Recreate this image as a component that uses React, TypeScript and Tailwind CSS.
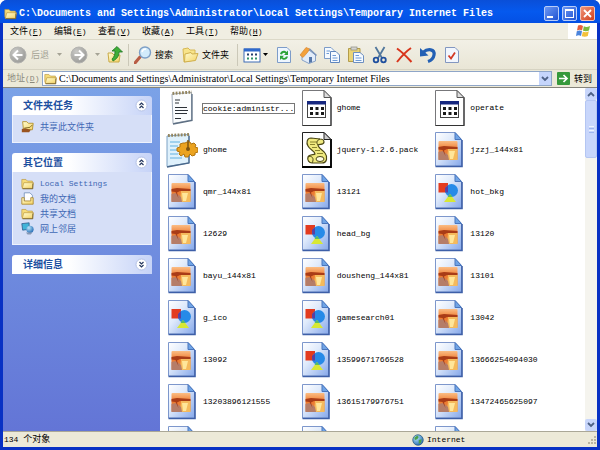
import React, { useState } from 'react';

type FileKind = 'text' | 'config' | 'inf' | 'script' | 'photo' | 'shapes';

interface FileItem {
  id: number;
  name: string;
  kind: FileKind;
}

interface PanelProps {
  title: string;
  open?: boolean;
  children?: React.ReactNode;
}

const PATH = 'C:\\Documents and Settings\\Administrator\\Local Settings\\Temporary Internet Files';

const MENUS = [
  { label: '文件', accel: 'F' },
  { label: '编辑', accel: 'E' },
  { label: '查看', accel: 'V' },
  { label: '收藏', accel: 'A' },
  { label: '工具', accel: 'T' },
  { label: '帮助', accel: 'H' },
];

const FILES: FileItem[] = [
  { id: 1, name: 'cookie:administr...', kind: 'text' },
  { id: 2, name: 'ghome', kind: 'config' },
  { id: 3, name: 'operate', kind: 'config' },
  { id: 4, name: 'ghome', kind: 'inf' },
  { id: 5, name: 'jquery-1.2.6.pack', kind: 'script' },
  { id: 6, name: 'jzzj_144x81', kind: 'photo' },
  { id: 7, name: 'qmr_144x81', kind: 'photo' },
  { id: 8, name: '13121', kind: 'photo' },
  { id: 9, name: 'hot_bkg', kind: 'shapes' },
  { id: 10, name: '12629', kind: 'photo' },
  { id: 11, name: 'head_bg', kind: 'shapes' },
  { id: 12, name: '13120', kind: 'photo' },
  { id: 13, name: 'bayu_144x81', kind: 'photo' },
  { id: 14, name: 'dousheng_144x81', kind: 'photo' },
  { id: 15, name: '13101', kind: 'photo' },
  { id: 16, name: 'g_ico', kind: 'shapes' },
  { id: 17, name: 'gamesearch01', kind: 'shapes' },
  { id: 18, name: '13042', kind: 'photo' },
  { id: 19, name: '13092', kind: 'photo' },
  { id: 20, name: '13599671766528', kind: 'shapes' },
  { id: 21, name: '13666254094030', kind: 'photo' },
  { id: 22, name: '13203896121555', kind: 'photo' },
  { id: 23, name: '13615179976751', kind: 'photo' },
  { id: 24, name: '13472465625097', kind: 'photo' },
  { id: 25, name: '', kind: 'photo' },
  { id: 26, name: '', kind: 'photo' },
  { id: 27, name: '', kind: 'photo' },
];

// Gradients shared by all icons
const IconDefs = () => (
  <svg width="0" height="0" className="absolute" aria-hidden="true">
    <defs>
      <linearGradient id="page" x1="0" y1="0" x2="1" y2="1">
        <stop offset="0" stopColor="#ffffff" />
        <stop offset="0.4" stopColor="#dfeafb" />
        <stop offset="1" stopColor="#86a8ea" />
      </linearGradient>
      <linearGradient id="sunset" x1="0" y1="0" x2="0" y2="1">
        <stop offset="0" stopColor="#fbbd84" />
        <stop offset="0.45" stopColor="#ee7a30" />
        <stop offset="1" stopColor="#dd8a44" />
      </linearGradient>
      <linearGradient id="folder" x1="0" y1="0" x2="1" y2="1">
        <stop offset="0" stopColor="#fffdd2" />
        <stop offset="1" stopColor="#f4d264" />
      </linearGradient>
      <radialGradient id="disc" cx="0.35" cy="0.3" r="0.8">
        <stop offset="0" stopColor="#c9c9c6" />
        <stop offset="1" stopColor="#979794" />
      </radialGradient>
      <radialGradient id="globe" cx="0.35" cy="0.3" r="0.8">
        <stop offset="0" stopColor="#b8e6fa" />
        <stop offset="1" stopColor="#1a63b0" />
      </radialGradient>
    </defs>
  </svg>
);

const BluePage = () => (
  <>
    <path d="M2.500 .500H22L28.500 7.500V34H2.500Z" fill="url(#page)" stroke="#7d97cc" />
    <path d="M29 8V34.500H2.500" fill="none" stroke="#3d5fa8" strokeWidth="1.600" />
    <path d="M22 .500V7.500H28.500Z" fill="#6fa4e6" stroke="#4a76bd" />
  </>
);

const FileIcon = ({ kind }: { kind: FileKind }) => {
  return (
    <svg viewBox="0 0 32 36" className="h-9 w-8 shrink-0" aria-hidden="true">
      {kind === 'text' && (
        <>
          <path d="M6 4L25.500 2.500V30L7 33.500Z" fill="#fafcfd" stroke="#8a98a8" strokeWidth="0.800" />
          <path d="M26 4V30.500L7 34" fill="none" stroke="#5c6e82" strokeWidth="1.300" />
          <path d="M6.500 3.500L26 2" stroke="#93855e" strokeWidth="3" strokeDasharray="1.800 1.400" />
          <path d="M9 10H14M9 13H13M9 17.500H21M9 20.500H22M9 23.500H21M9 28.500H15" stroke="#2c3238" strokeWidth="1.200" />
        </>
      )}

      {kind === 'config' && (
        <>
          <path d="M2.500 .500H24L31 7.500V35.500H2.500Z" fill="#fff" stroke="#77777a" />
          <path d="M31 7.500V35.500H2.500" fill="none" stroke="#333" strokeWidth="1.200" />
          <path d="M24 .500V7.500H31Z" fill="#ddd" stroke="#555" />
          <rect x="7.500" y="11.500" width="18" height="16" fill="#fff" stroke="#444" />
          <rect x="7" y="11" width="19" height="3.500" fill="#16277f" />
          <path d="M10 18.500H24M10 23.500H24" stroke="#1a1a1a" strokeWidth="3" strokeDasharray="3 2.500" />
        </>
      )}

      {kind === 'inf' && (
        <>
          <path d="M1 4L23 2.500V31L1 34.500Z" fill="#dff1fc" stroke="#7da2c4" />
          <path d="M23 4V31L1 35" fill="none" stroke="#49678a" strokeWidth="1.300" />
          <path d="M2 3.500L23 2.500" stroke="#93855e" strokeWidth="3" strokeDasharray="1.800 1.400" />
          <path d="M4 10H14M4 14H12M4 18H11M4 22H12M4 26H16" stroke="#63b1e2" strokeWidth="1.200" />
          <path
            d="M19 11L21 10H24L25 12L28 11L30 13L29 15L32 16V20L29 21L29 23L26 24L24 22L22 25H19L18 22L15 24L13 22L14 20L11 19V16L14 15L14 12L17 11Z"
            fill="#eba320"
            stroke="#b2750f"
          />
          <path d="M22 8V18" stroke="#7c5410" strokeWidth="1.500" />
          <circle cx="22" cy="17" r="2" fill="#7c5410" />
        </>
      )}

      {kind === 'script' && (
        <>
          <path d="M2.500 .500H24L31 7.500V35H2.500Z" fill="#fff" stroke="#222" />
          <path d="M31 7V35H2" fill="none" stroke="#000" strokeWidth="1.800" />
          <path d="M24 .500V7.500H31Z" fill="#ccc" stroke="#222" />
          <path
            d="M11 6C7 6 6 11 8 14C10 18 15 19 15 22C14 23 9 22 8 25C7 28 9 31 12 31H22C27 31 28 25 25 21C23 18 18 16 18 13C20 12 24 13 24 10C24 8 22 7 20 7Z"
            fill="#f0ea80"
            stroke="#4b4715"
            strokeWidth="1.200"
          />
          <path d="M10 10H17M10 12.500H15M12 15.500H17M15 18.500H20M17 21.500H23" stroke="#8a842f" />
          <path d="M8 25C11 23 15 26 12 31M18 13C16 11 17 8 20 7" fill="none" stroke="#4b4715" />
          <ellipse cx="20" cy="27" rx="4" ry="2.500" fill="#fffce0" stroke="#4b4715" />
        </>
      )}

      {kind === 'photo' && (
        <>
          <BluePage />
          <rect x="5.500" y="9" width="19" height="19" rx="1" fill="url(#sunset)" />
          <path d="M15 17H24.500V28H14Z" fill="#f5ba5c" />
          <path d="M16 19H22L20 27H17Z" fill="#ffe69a" />
          <path d="M5.500 20L10 19L15 23L16 28H5.500Z" fill="#b57d68" />
          <path d="M5.500 15L11 14L24.500 15V17L14 17L11 18.500L12.500 24L9.500 18L5.500 17.500Z" fill="#a93c17" />
        </>
      )}

      {kind === 'shapes' && (
        <>
          <BluePage />
          <rect x="5.500" y="9" width="9.500" height="9.500" fill="#e33b1f" />
          <circle cx="18.500" cy="16.500" r="6.500" fill="#268ae8" />
          <path d="M12 14L15 11.500V18.500H12.300Z" fill="#5a3ea0" />
          <path d="M17 20L23 28H11Z" fill="#d8e834" />
          <path d="M17 20L19.500 23H14.500Z" fill="#58bd63" />
        </>
      )}
    </svg>
  );
};

const FolderIcon = () => (
  <svg viewBox="0 0 16 16" className="size-[13px] shrink-0" aria-hidden="true">
    <path d="M1 3H6L8 5H14V14H2L1 12Z" fill="#f6dc7a" stroke="#b9953c" strokeWidth="0.800" />
    <path d="M3.500 7H15.500L14 14H1.500Z" fill="url(#folder)" stroke="#b9953c" strokeWidth="0.800" />
    <path d="M2 14.500H14.500V8" fill="none" stroke="#6e5c2c" />
  </svg>
);

const DocumentsIcon = () => (
  <svg viewBox="0 0 16 16" className="size-[13px] shrink-0" aria-hidden="true">
    <path d="M4 1H11L14 4V12H4Z" fill="#fff" stroke="#6f8db8" />
    <path d="M1 7H4V11H12V7H15V15H1Z" fill="url(#folder)" stroke="#a88328" />
  </svg>
);

const ShareIcon = () => (
  <svg viewBox="0 0 16 16" className="size-[13px] shrink-0" aria-hidden="true">
    <path d="M2 2H7L9 4H15L14 12H3Z" fill="url(#folder)" stroke="#b08a1e" />
    <path d="M1 11L5 10L12 12L10 15H1Z" fill="#9a5420" />
    <path d="M4 10L11 9L14 6" fill="none" stroke="#6e5a17" />
  </svg>
);

const NetworkIcon = () => (
  <svg viewBox="0 0 16 16" className="size-[13px] shrink-0" aria-hidden="true">
    <path d="M1 2L10 1V9L2 10Z" fill="#3fb4d8" stroke="#2d5f8f" />
    <circle cx="11" cy="9" r="4.500" fill="url(#globe)" />
    <path d="M6 13H14L12 15.500H8Z" fill="#8899b5" />
  </svg>
);

const GlobeIcon = () => (
  <svg viewBox="0 0 16 16" className="h-3 w-3 shrink-0" aria-hidden="true">
    <circle cx="8" cy="8" r="7" fill="url(#globe)" stroke="#2a5b7e" />
    <path d="M3 5L7 2L9 4L7 7L4 8ZM9 8L13 7L12 12L9 13Z" fill="#4aa14b" />
  </svg>
);

const NavDisc = ({ forward = false }: { forward?: boolean }) => (
  <svg viewBox="0 0 18 18" className="size-[18px]" aria-hidden="true">
    <circle cx="9" cy="9" r="8" fill="url(#disc)" stroke="#b3b3af" />
    {forward ? (
      <path d="M4.500 9H13M9 4.500L13.500 9L9 13.500" fill="none" stroke="#fff" strokeWidth="2" />
    ) : (
      <path d="M13.500 9H5M9 4.500L4.500 9L9 13.500" fill="none" stroke="#fff" strokeWidth="2" />
    )}
  </svg>
);

const Caret = ({ className }: { className: string }) => (
  <svg viewBox="0 0 5 3" className={className} aria-hidden="true">
    <path d="M0 0H5L2.500 3Z" fill="currentColor" />
  </svg>
);

const ToolButton = ({ label, children }: { label: string; children: React.ReactNode }) => (
  <button type="button" aria-label={label} className="w-6 flex justify-center">
    <svg viewBox="0 0 18 18" className="size-[18px]" aria-hidden="true">
      {children}
    </svg>
  </button>
);

const Panel: React.FC<PanelProps> = ({ title, open = true, children }) => {
  const [expanded, setExpanded] = useState(open);

  return (
    <section className="rounded-t-[3px] overflow-hidden">
      <button
        type="button"
        onClick={() => setExpanded(!expanded)}
        aria-expanded={expanded}
        className="flex h-[19px] w-full items-center justify-between bg-linear-to-r from-white from-40% to-[#c6d3f7] pl-[11px] pr-1 text-[10px] font-bold text-[#1c4f9f]"
      >
        {title}
        <svg viewBox="0 0 13 13" className="size-[13px]" aria-hidden="true">
          <circle cx="6.500" cy="6.500" r="5.500" fill="#fff" stroke="#b3c0e4" />
          <path
            d={expanded ? 'M4.500 6L6.500 4L8.500 6M4.500 9L6.500 7L8.500 9' : 'M4.500 4L6.500 6L8.500 4M4.500 7L6.500 9L8.500 7'}
            fill="none"
            stroke="#26385f"
            strokeWidth="1.200"
          />
        </svg>
      </button>
      {expanded && children && (
        <ul className="border border-t-0 border-[#eef2fd] bg-[#d6dff7] px-2 pt-1 pb-2">{children}</ul>
      )}
    </section>
  );
};

const PanelLink = ({ icon, children }: { icon: React.ReactNode; children: React.ReactNode }) => (
  <li>
    <a href="#" className="flex h-[15px] items-center gap-[6px] text-[#3f68b5]">
      {icon}
      {children}
    </a>
  </li>
);

const Separator = () => <div className="h-[22px] w-px bg-[#cbc8b8]" />;

export default function App() {
  const [address, setAddress] = useState(PATH);

  return (
    <div className="flex h-screen flex-col overflow-hidden rounded-t-[7px] bg-[#0831c4] font-['Liberation_Sans','Noto_Sans_CJK_SC',sans-serif] text-[9px] leading-3 text-black">
      <IconDefs />

      {/* Title bar */}
      <header className="flex h-[23px] shrink-0 items-center bg-linear-to-b from-[#0a4fd8] via-[#0559ee] to-[#0450e4] pl-1 pr-[5px] pt-1">
        <FolderIcon />
        <h1 className="ml-[2px] flex-1 truncate font-['Liberation_Mono',monospace] text-[10px] font-bold text-white">{PATH}</h1>
        <div className="flex gap-[3px]">
          <button type="button" aria-label="最小化" className="flex size-[15px] items-end rounded-[2px] border border-[#b9cdf8] bg-linear-to-br from-[#6d97f3] to-[#1f52d2] p-[2px]">
            <span className="h-[2px] w-[6px] bg-white" />
          </button>
          <button type="button" aria-label="最大化" className="flex size-[15px] items-center justify-center rounded-[2px] border border-[#b9cdf8] bg-linear-to-br from-[#6d97f3] to-[#1f52d2]">
            <span className="size-[9px] border border-t-2 border-white" />
          </button>
          <button type="button" aria-label="关闭" className="flex size-[15px] items-center justify-center rounded-[2px] border border-[#f2c4b8] bg-linear-to-br from-[#f09276] to-[#cf3d16]">
            <svg viewBox="0 0 9 9" className="size-[9px]" aria-hidden="true">
              <path d="M1 1L8 8M8 1L1 8" stroke="#fff" strokeWidth="1.800" />
            </svg>
          </button>
        </div>
      </header>

      <div className="mx-[3px] mb-[3px] flex min-h-0 flex-1 flex-col bg-[#ece9d8]">
        {/* Menu bar */}
        <nav className="flex h-[17px] shrink-0 items-stretch border-b border-[#dcd9c8] bg-[#f0eee2]">
          <div className="flex flex-1 items-center pl-[7px]">
            {MENUS.map((menu) => (
              <button key={menu.accel} type="button" className="w-11 text-left">
                {menu.label}
                <span className="font-['Liberation_Mono',monospace] text-[8px]">
                  (<u>{menu.accel}</u>)
                </span>
              </button>
            ))}
          </div>
          <div className="flex w-[29px] items-center justify-center bg-white">
            <svg viewBox="0 0 16 14" className="h-[14px] w-4" aria-hidden="true">
              <path d="M3 1.500C5 .500 6.500 1 8 2L7 6.500C5.500 5.500 4 5.500 2 6.500Z" fill="#e8603c" />
              <path d="M8.800 2.300C11 3.300 12.500 3 15 2L14 6.500C12 7.500 10 7.500 8 6.800Z" fill="#7cb93f" />
              <path d="M1.800 7.300C4 6.300 5.500 6.500 7 7.300L6 12C4.500 11 3 11 1 12Z" fill="#4b84dc" />
              <path d="M7.800 7.700C10 8.500 12 8.200 13.800 7.300L12.800 12C11 13 9 13 6.800 12.300Z" fill="#f4c13a" />
            </svg>
          </div>
        </nav>

        {/* Toolbar */}
        <div className="flex h-[30px] shrink-0 items-center border-b border-[#d6d3c2] bg-linear-to-b from-[#f2f0e6] to-[#e9e6d6] pl-[6px]">
          <button type="button" disabled className="flex items-center gap-1 text-[#a5a395]">
            <NavDisc />
            后退
            <Caret className="ml-1 h-[3px] w-[5px]" />
          </button>
          <button type="button" disabled aria-label="前进" className="ml-2 flex items-center gap-[7px] text-[#a5a395]">
            <NavDisc forward />
            <Caret className="h-[3px] w-[5px]" />
          </button>
          <button type="button" aria-label="向上" className="ml-[6px] mr-1">
            <svg viewBox="0 0 18 18" className="size-[18px]" aria-hidden="true">
              <path d="M2 7H6L8 9H14L13 16H3Z" fill="url(#folder)" stroke="#c9aa48" />
              <path d="M7 15C11 13 13 10 13 6H16.500L11 .500L6 5H9C9 9 8 11 6 13Z" fill="#3fae37" stroke="#1e7421" strokeWidth="0.800" />
            </svg>
          </button>
          <Separator />
          <button type="button" className="ml-[5px] flex items-center gap-[3px]">
            <svg viewBox="0 0 18 18" className="size-[18px]" aria-hidden="true">
              <path d="M1 17L6 11" stroke="#b85c44" strokeWidth="3" strokeLinecap="round" />
              <circle cx="11" cy="6.500" r="5.500" fill="#d2ebfb" stroke="#7d9fc6" strokeWidth="1.400" />
              <path d="M8 6C8.500 4 10 3 12 3" fill="none" stroke="#fff" strokeWidth="1.500" />
            </svg>
            搜索
          </button>
          <button type="button" className="ml-2 mr-2 flex items-center gap-[3px]">
            <svg viewBox="0 0 18 18" className="size-[18px]" aria-hidden="true">
              <path d="M2 3L7 2L9 4L14 4V14L3 16Z" fill="#f8e48a" stroke="#d6b856" />
              <path d="M4 8L10 6.500L11 8L17 7.500L14.500 14.500L3.500 16Z" fill="url(#folder)" stroke="#d0b04e" />
            </svg>
            文件夹
          </button>
          <Separator />
          <button type="button" aria-label="查看方式" className="ml-[5px] mr-1 flex items-center gap-[2px]">
            <svg viewBox="0 0 18 18" className="size-[18px]" aria-hidden="true">
              <rect x="1" y="3" width="16" height="13" fill="#fff" stroke="#3c6bb5" />
              <rect x="1" y="2.500" width="16" height="3" fill="#2f69cc" />
              <path d="M4 8.500H15" stroke="#263f6d" strokeWidth="2" strokeDasharray="2 2" />
              <path d="M4 12.500H15" stroke="#2f9268" strokeWidth="2" strokeDasharray="2 2" />
            </svg>
            <Caret className="h-[3px] w-[5px]" />
          </button>
          <ToolButton label="刷新">
            <path d="M2.500 1.500H12L15.500 5V16.500H2.500Z" fill="#eef6ff" stroke="#7d9cc9" />
            <path d="M5 8C6 4 10 4 11.500 6L13 4.500V9H9L10.500 7.500C9 6 7.500 7 7 8.500Z" fill="#2ca238" />
            <path d="M13 10.500C12 14.500 8 14.500 6.500 12.500L5 14V9.800H9L7.500 11.300C9 12.500 10.500 12 11 10.500Z" fill="#2ca238" />
          </ToolButton>
          <ToolButton label="主页">
            <path d="M3 9L10 4L16.500 9V15L10 17.500L3 14Z" fill="#e2ecf9" stroke="#87a1c6" />
            <path d="M1 9L7 1.500L11 3L8 7L4 11.500Z" fill="#f3a13b" stroke="#d27e28" strokeWidth="0.600" />
            <path d="M10.500 3L17.500 9.500" stroke="#7791b8" strokeWidth="1.500" />
            <path d="M10 11H13V16L10 17Z" fill="#5577a8" />
          </ToolButton>
          <ToolButton label="复制">
            <path d="M1.500 1.500H8L11 4.500V12.500H1.500Z" fill="#f5faff" stroke="#7c9cc9" />
            <path d="M7.500 5.500H13L16.500 9V16.500H7.500Z" fill="#f5faff" stroke="#5f86bd" />
            <path d="M3.500 5H7M3.500 7.500H6M9.500 9.500H13M9.500 12H14.500M9.500 14.500H14.500" stroke="#6d9ad6" />
          </ToolButton>
          <ToolButton label="粘贴">
            <path d="M1.500 2.500H13V15.500H1.500Z" fill="#ead476" stroke="#b39c4a" />
            <rect x="4" y="1" width="6" height="3" fill="#d4d4cf" stroke="#8b8b80" strokeWidth="0.700" />
            <path d="M6.500 6.500H13L16.500 9.500V16.500H6.500Z" fill="#f5faff" stroke="#6d8fc0" />
            <path d="M8.500 9.500H12M8.500 12H14.500M8.500 14.500H14.500" stroke="#6d9ad6" />
          </ToolButton>
          <ToolButton label="剪切">
            <path d="M4.500 1L11 12M13.500 1L7 12" stroke="#52779c" strokeWidth="1.800" />
            <circle cx="5" cy="14" r="2.300" fill="none" stroke="#1f4f9e" strokeWidth="1.800" />
            <circle cx="12.500" cy="14" r="2.300" fill="none" stroke="#1f4f9e" strokeWidth="1.800" />
          </ToolButton>
          <ToolButton label="删除">
            <path d="M2 2.500C7 6 12 11 16.500 16M16 2C10 6 6 11 2 16" fill="none" stroke="#d8351c" strokeWidth="2" />
          </ToolButton>
          <ToolButton label="撤消">
            <path d="M4 6.500C9 2 16 3 15 9C14.500 12 12 14.500 9 15.500" fill="none" stroke="#2360b4" strokeWidth="3.200" />
            <path d="M1 2V10.500L9.500 9.500Z" fill="#2360b4" />
          </ToolButton>
          <ToolButton label="属性">
            <path d="M2.500 1.500H12L15.500 5V16.500H2.500Z" fill="#f2f6fd" stroke="#8297c0" />
            <path d="M5.500 9.500L8 12.500L12 6.500" fill="none" stroke="#d23a25" strokeWidth="1.800" />
          </ToolButton>
        </div>

        {/* Address bar */}
        <form onSubmit={(e) => e.preventDefault()} className="flex h-[17px] shrink-0 items-center pl-1 pr-[5px]">
          <label htmlFor="address" className="w-[35px] whitespace-nowrap text-[#8a887b]">
            地址
            <span className="font-['Liberation_Mono',monospace] text-[8px]">
              (<u>D</u>)
            </span>
          </label>
          <div className="flex h-[15px] min-w-0 flex-1 items-center gap-[2px] border border-[#8fa6c8] bg-white pl-px">
            <FolderIcon />
            <input
              id="address"
              type="text"
              value={address}
              onChange={(e) => setAddress(e.target.value)}
              className="min-w-0 flex-1 font-['Liberation_Serif',serif] text-[10px] outline-none"
            />
            <button type="button" aria-label="展开地址列表" className="flex h-[13px] w-3 items-center justify-center bg-[#c5d5fb]">
              <svg viewBox="0 0 8 6" className="h-[6px] w-2" aria-hidden="true">
                <path d="M1 1L4 4L7 1" fill="none" stroke="#4d6185" strokeWidth="1.800" />
              </svg>
            </button>
          </div>
          <button type="submit" className="ml-[5px] flex items-center gap-1">
            <svg viewBox="0 0 13 13" className="size-[13px]" aria-hidden="true">
              <rect width="13" height="13" rx="1" fill="#36993b" />
              <path d="M2 6.500H10M6.500 3L10 6.500L6.500 10" fill="none" stroke="#fff" strokeWidth="1.700" />
            </svg>
            转到
          </button>
        </form>

        <main className="flex min-h-0 flex-1 border-t border-[#85837a]">
          {/* Task pane */}
          <aside className="flex w-[157px] shrink-0 flex-col gap-[10px] bg-linear-to-b from-[#7ba2e7] to-[#6375d6] pt-2 pr-2 pl-[9px]">
            <Panel title="文件夹任务">
              <PanelLink icon={<ShareIcon />}>共享此文件夹</PanelLink>
            </Panel>
            <Panel title="其它位置">
              <PanelLink icon={<FolderIcon />}>
                <span className="font-['Liberation_Mono',monospace] text-[8px]">Local Settings</span>
              </PanelLink>
              <PanelLink icon={<DocumentsIcon />}>我的文档</PanelLink>
              <PanelLink icon={<FolderIcon />}>共享文档</PanelLink>
              <PanelLink icon={<NetworkIcon />}>网上邻居</PanelLink>
            </Panel>
            <Panel title="详细信息" open={false} />
          </aside>

          {/* File list */}
          <ul className="grid min-w-0 flex-1 auto-rows-[36px] grid-cols-3 gap-y-[6px] overflow-hidden bg-white pt-[2px] pl-[6px] pr-[18px] font-['Liberation_Mono',monospace] text-[8px]">
            {FILES.map((file, index) => (
              <li key={file.id} className="flex min-w-0 items-center gap-1">
                <FileIcon kind={file.kind} />
                <span className={index === 0 ? 'border border-[#777] whitespace-nowrap leading-[9px]' : 'border border-transparent whitespace-nowrap'}>
                  {file.name}
                </span>
              </li>
            ))}
          </ul>

          {/* Scroll bar */}
          <div className="flex w-3 shrink-0 flex-col items-stretch bg-[#f5f4ee]">
            <button type="button" aria-label="向上滚动" className="flex h-3 items-center justify-center rounded-[2px] bg-[#c8d6fb]">
              <svg viewBox="0 0 8 6" className="h-[6px] w-2" aria-hidden="true">
                <path d="M1 5L4 2L7 5" fill="none" stroke="#4d6185" strokeWidth="1.800" />
              </svg>
            </button>
            <div className="flex h-[58px] flex-col items-center justify-center gap-px rounded-[2px] border border-[#b4c6f2] bg-[#c8d6fb]">
              <span className="h-px w-[5px] bg-[#eef4fe]" />
              <span className="h-px w-[5px] bg-[#9db5ee]" />
              <span className="h-px w-[5px] bg-[#eef4fe]" />
              <span className="h-px w-[5px] bg-[#9db5ee]" />
            </div>
            <button type="button" aria-label="向下滚动" className="mt-auto flex h-3 items-center justify-center rounded-[2px] bg-[#c8d6fb]">
              <svg viewBox="0 0 8 6" className="h-[6px] w-2" aria-hidden="true">
                <path d="M1 1L4 4L7 1" fill="none" stroke="#4d6185" strokeWidth="1.800" />
              </svg>
            </button>
          </div>
        </main>

        {/* Status bar */}
        <footer className="flex h-4 shrink-0 items-center border-t border-[#aaa797] pl-px">
          <span className="flex-1">
            <span className="font-['Liberation_Mono',monospace] text-[8px]">134 </span>
            个对象
          </span>
          <div className="flex w-[185px] items-center gap-[3px]">
            <GlobeIcon />
            <span className="flex-1 font-['Liberation_Mono',monospace] text-[8px]">Internet</span>
            <svg viewBox="0 0 10 10" className="size-[10px]" aria-hidden="true">
              <path d="M7 1H9V3H7ZM7 4H9V6H7ZM7 7H9V9H7ZM4 4H6V6H4ZM4 7H6V9H4ZM1 7H3V9H1Z" fill="#b9b5a2" />
            </svg>
          </div>
        </footer>
      </div>
    </div>
  );
}
